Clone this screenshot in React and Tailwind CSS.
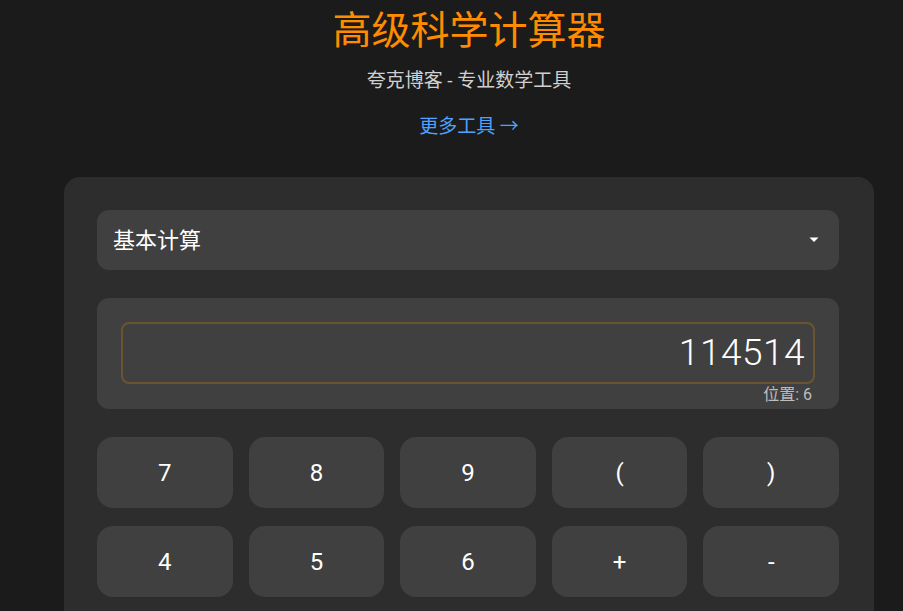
import React, { useState } from "react";

const keys = ["7", "8", "9", "(", ")", "4", "5", "6", "+", "-"];

const App = () => {
  const [value] = useState("114514");

  return (
    <div
      className="min-h-[611px] bg-[#1b1b1b] overflow-hidden"
      style={{ fontFamily: '"Roboto", "Noto Sans CJK SC", sans-serif' }}
    >
      <div className="ml-[64px] w-[810px]">
        <header className="text-center pt-[7px]">
          <h1 className="text-[39px] leading-[48px] text-[#ff8c00]">高级科学计算器</h1>
          <p className="mt-[13px] text-[19px] leading-[26px] text-[#d0d0d0]">夸克博客 - 专业数学工具</p>
          <a href="#" className="inline-block mt-[20px] text-[19px] leading-[26px] text-[#4da3ff]">
            更多工具 →
          </a>
        </header>

        <div className="mt-[37px] rounded-2xl bg-[#2d2d2d] pt-[33px] pl-[33px] pr-[35px] pb-10">
          {/* mode select */}
          <div className="flex items-center justify-between h-[60px] rounded-xl bg-[#404040] pl-[16px] pr-[20px]">
            <span className="text-[22px] text-white">基本计算</span>
            <svg width="10" height="6" viewBox="0 0 10 6">
              <path d="M0.5 0.5 L9.5 0.5 L5 5 Z" fill="#fff" />
            </svg>
          </div>

          {/* display */}
          <div className="mt-[28px] h-[111px] rounded-xl bg-[#404040] px-[24px] pt-[24px]">
            <div className="h-[62px] rounded-lg border-2 border-[#6b5432] flex items-center justify-end pr-[8px]">
              <span className="text-[37px] font-light text-white tracking-[0.5px]">{value}</span>
            </div>
            <div className="text-right text-[16px] leading-[18px] text-[#bdbdbd] pr-[3px] mt-[2px]">
              位置: 6
            </div>
          </div>

          {/* keypad */}
          <div className="mt-[28px] grid grid-cols-5 gap-x-4 gap-y-[18px]">
            {keys.map((k) => (
              <button
                key={k}
                className="h-[71px] rounded-2xl bg-[#404040] text-[24px] text-white"
              >
                {k}
              </button>
            ))}
          </div>
        </div>
      </div>
    </div>
  );
};

export default App;
